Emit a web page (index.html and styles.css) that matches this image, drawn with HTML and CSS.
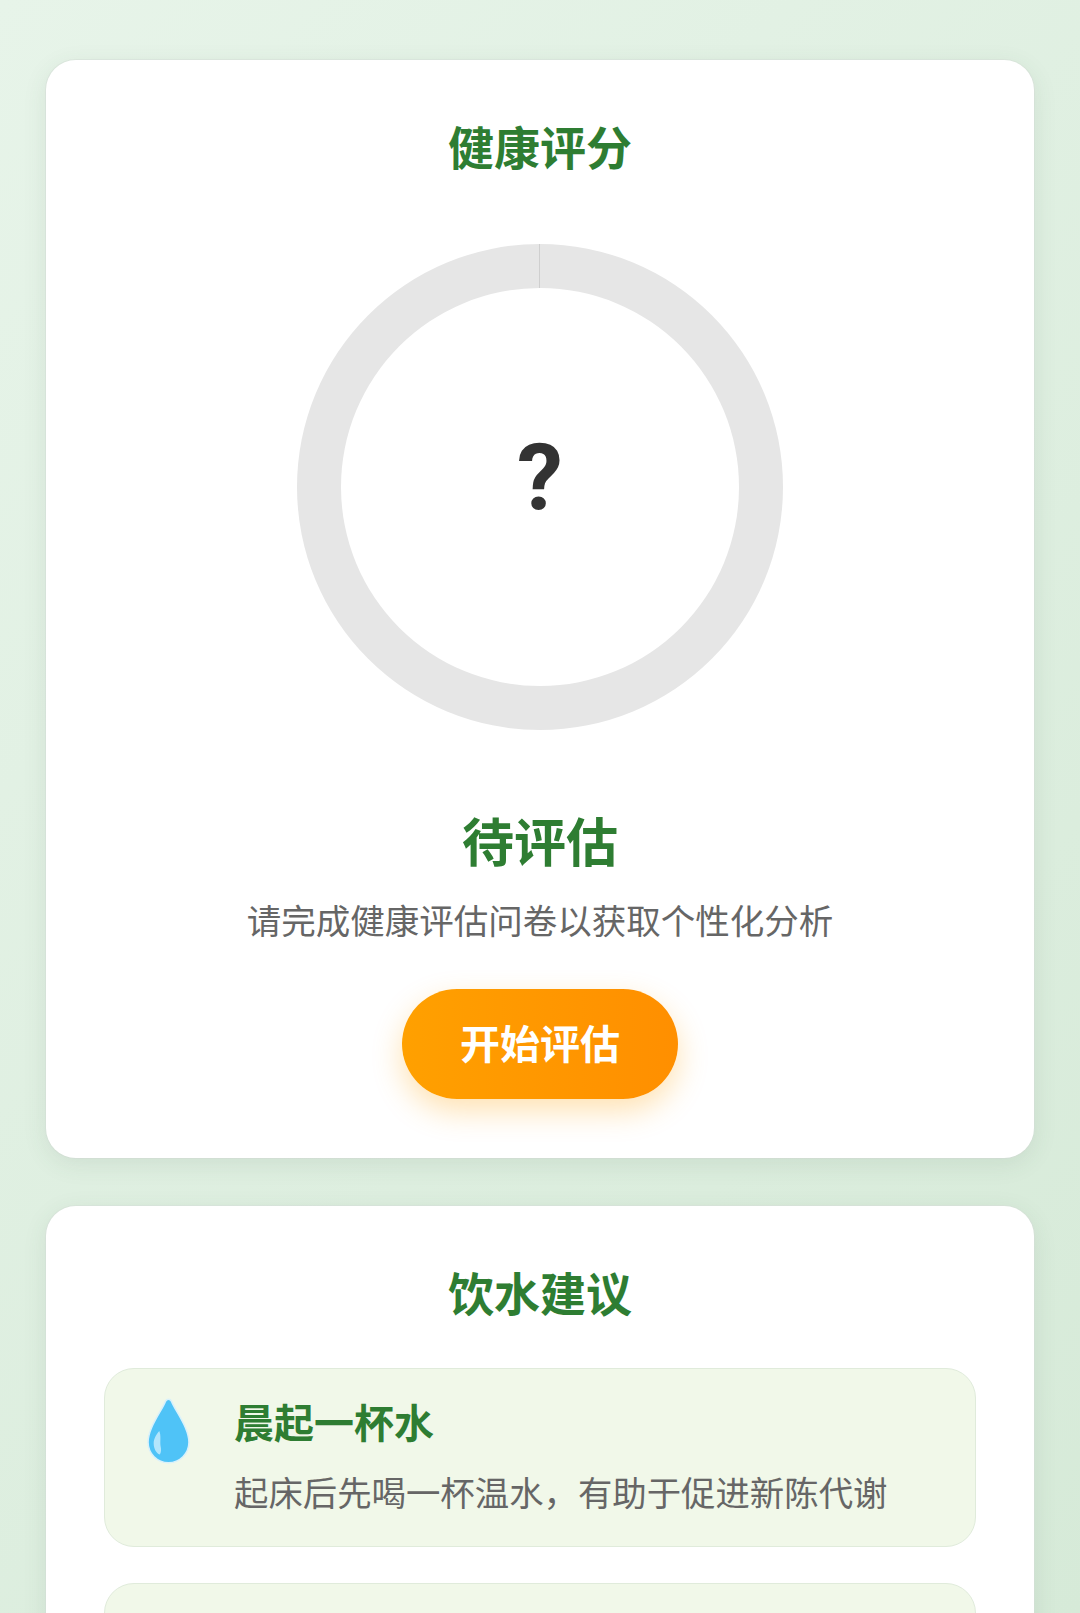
FILE: index.html
```html
<!DOCTYPE html>
<html lang="zh-CN">
<head>
<meta charset="utf-8">
<title>健康评分</title>
<link rel="stylesheet" href="styles.css">
</head>
<body>
<main class="page">
  <section class="card score-card">
    <h2 class="card-title">健康评分</h2>
    <div class="ring"><div class="ring-hole"><span class="ring-mark">?</span></div></div>
    <h3 class="status">待评估</h3>
    <p class="hint">请完成健康评估问卷以获取个性化分析</p>
    <button class="cta" type="button">开始评估</button>
  </section>
  <section class="card water-card">
    <h2 class="card-title">饮水建议</h2>
    <div class="tips">
      <article class="tip">
        <svg class="drop" viewBox="-2 -2 44 66" aria-hidden="true">
          <path d="M20 0c-1.500 0-2.500 1-3 2C13 12 0 28 0 42a20 20 0 0 0 40 0C40 28 27 12 23 2c-.5-1-1.500-2-3-2Z" fill="#4fc3f7" stroke="#d9f1fb" stroke-width="1.500"/>
          <path d="M11 31C8 34 5.500 39 5.500 43c0 5 2.500 10 6 11 1.500-2 1.500-5 .8-8-.8-5 .7-10-1.300-15Z" fill="#b3e5fc"/>
        </svg>
        <div class="tip-body">
          <h4 class="tip-title">晨起一杯水</h4>
          <p class="tip-text">起床后先喝一杯温水，有助于促进新陈代谢</p>
        </div>
      </article>
      <article class="tip"></article>
    </div>
  </section>
</main>
</body>
</html>
```

FILE: styles.css
```css
* { box-sizing: border-box; }
html, body { margin: 0; height: 1613px; overflow: hidden; }
body {
  background: linear-gradient(135deg, #e7f4e9 0%, #d6ead8 100%);
  font-family: "Noto Sans CJK SC", "Noto Sans", sans-serif;
}
.page {
  display: flex;
  flex-direction: column;
  gap: 48px;
  padding: 60px 46px 0 46px;
}
.card {
  background: #fff;
  border-radius: 30px;
  box-shadow: 0 6px 24px rgba(60, 90, 65, 0.1), 0 0 0 1px rgba(220, 228, 222, 0.6);
  padding: 53px 58px;
}
.score-card {
  height: 1098px;
  display: flex;
  flex-direction: column;
  align-items: center;
}
.card-title {
  margin: 0;
  font-size: 46px;
  line-height: 64px;
  font-weight: 700;
  color: #2e7d32;
  text-align: center;
}
.ring {
  width: 486px;
  height: 486px;
  margin-top: 67px;
  border-radius: 50%;
  background: #e6e6e6;
  padding: 44px;
  position: relative;
}
.ring::before {
  content: "";
  position: absolute;
  left: calc(50% - 1px);
  top: 0;
  width: 1px;
  height: 44px;
  background: #cfcfcf;
}
.ring-hole {
  width: 100%;
  height: 100%;
  border-radius: 50%;
  background: #fff;
  display: flex;
  align-items: center;
  justify-content: center;
}
.ring-mark {
  font-family: "Roboto", "Liberation Sans", sans-serif;
  font-size: 92px;
  line-height: 1;
  font-weight: 700;
  color: #333;
  margin-bottom: 18px;
}
.status {
  margin: 74px 0 0;
  font-size: 52px;
  line-height: 72px;
  font-weight: 700;
  color: #2e7d32;
}
.hint {
  margin: 19px 0 0;
  font-size: 34.500px;
  line-height: 48px;
  color: #666;
}
.cta {
  margin-top: 46px;
  width: 276px;
  height: 110px;
  padding: 0 0 5px;
  border: 0;
  border-radius: 55px;
  background: linear-gradient(90deg, #ffa000, #ff8f00);
  box-shadow: 0 12px 30px rgba(255, 160, 0, 0.3);
  color: #fff;
  font-family: inherit;
  font-size: 40px;
  font-weight: 700;
}
.water-card { flex: 1; height: 600px; }
.tips {
  display: flex;
  flex-direction: column;
  gap: 36px;
  margin-top: 45px;
}
.tip {
  display: flex;
  gap: 43px;
  min-height: 179px;
  padding: 28px 41px;
  background: #f1f8e9;
  border: 1px solid #e0ebdb;
  border-radius: 30px;
}
.drop { width: 45px; height: 68px; flex: none; }
.tip-title {
  margin: 0;
  font-size: 40px;
  line-height: 48px;
  font-weight: 700;
  color: #2e7d32;
}
.tip-text {
  margin: 22px 0 0;
  font-size: 34.400px;
  line-height: 48px;
  color: #666;
}
```
